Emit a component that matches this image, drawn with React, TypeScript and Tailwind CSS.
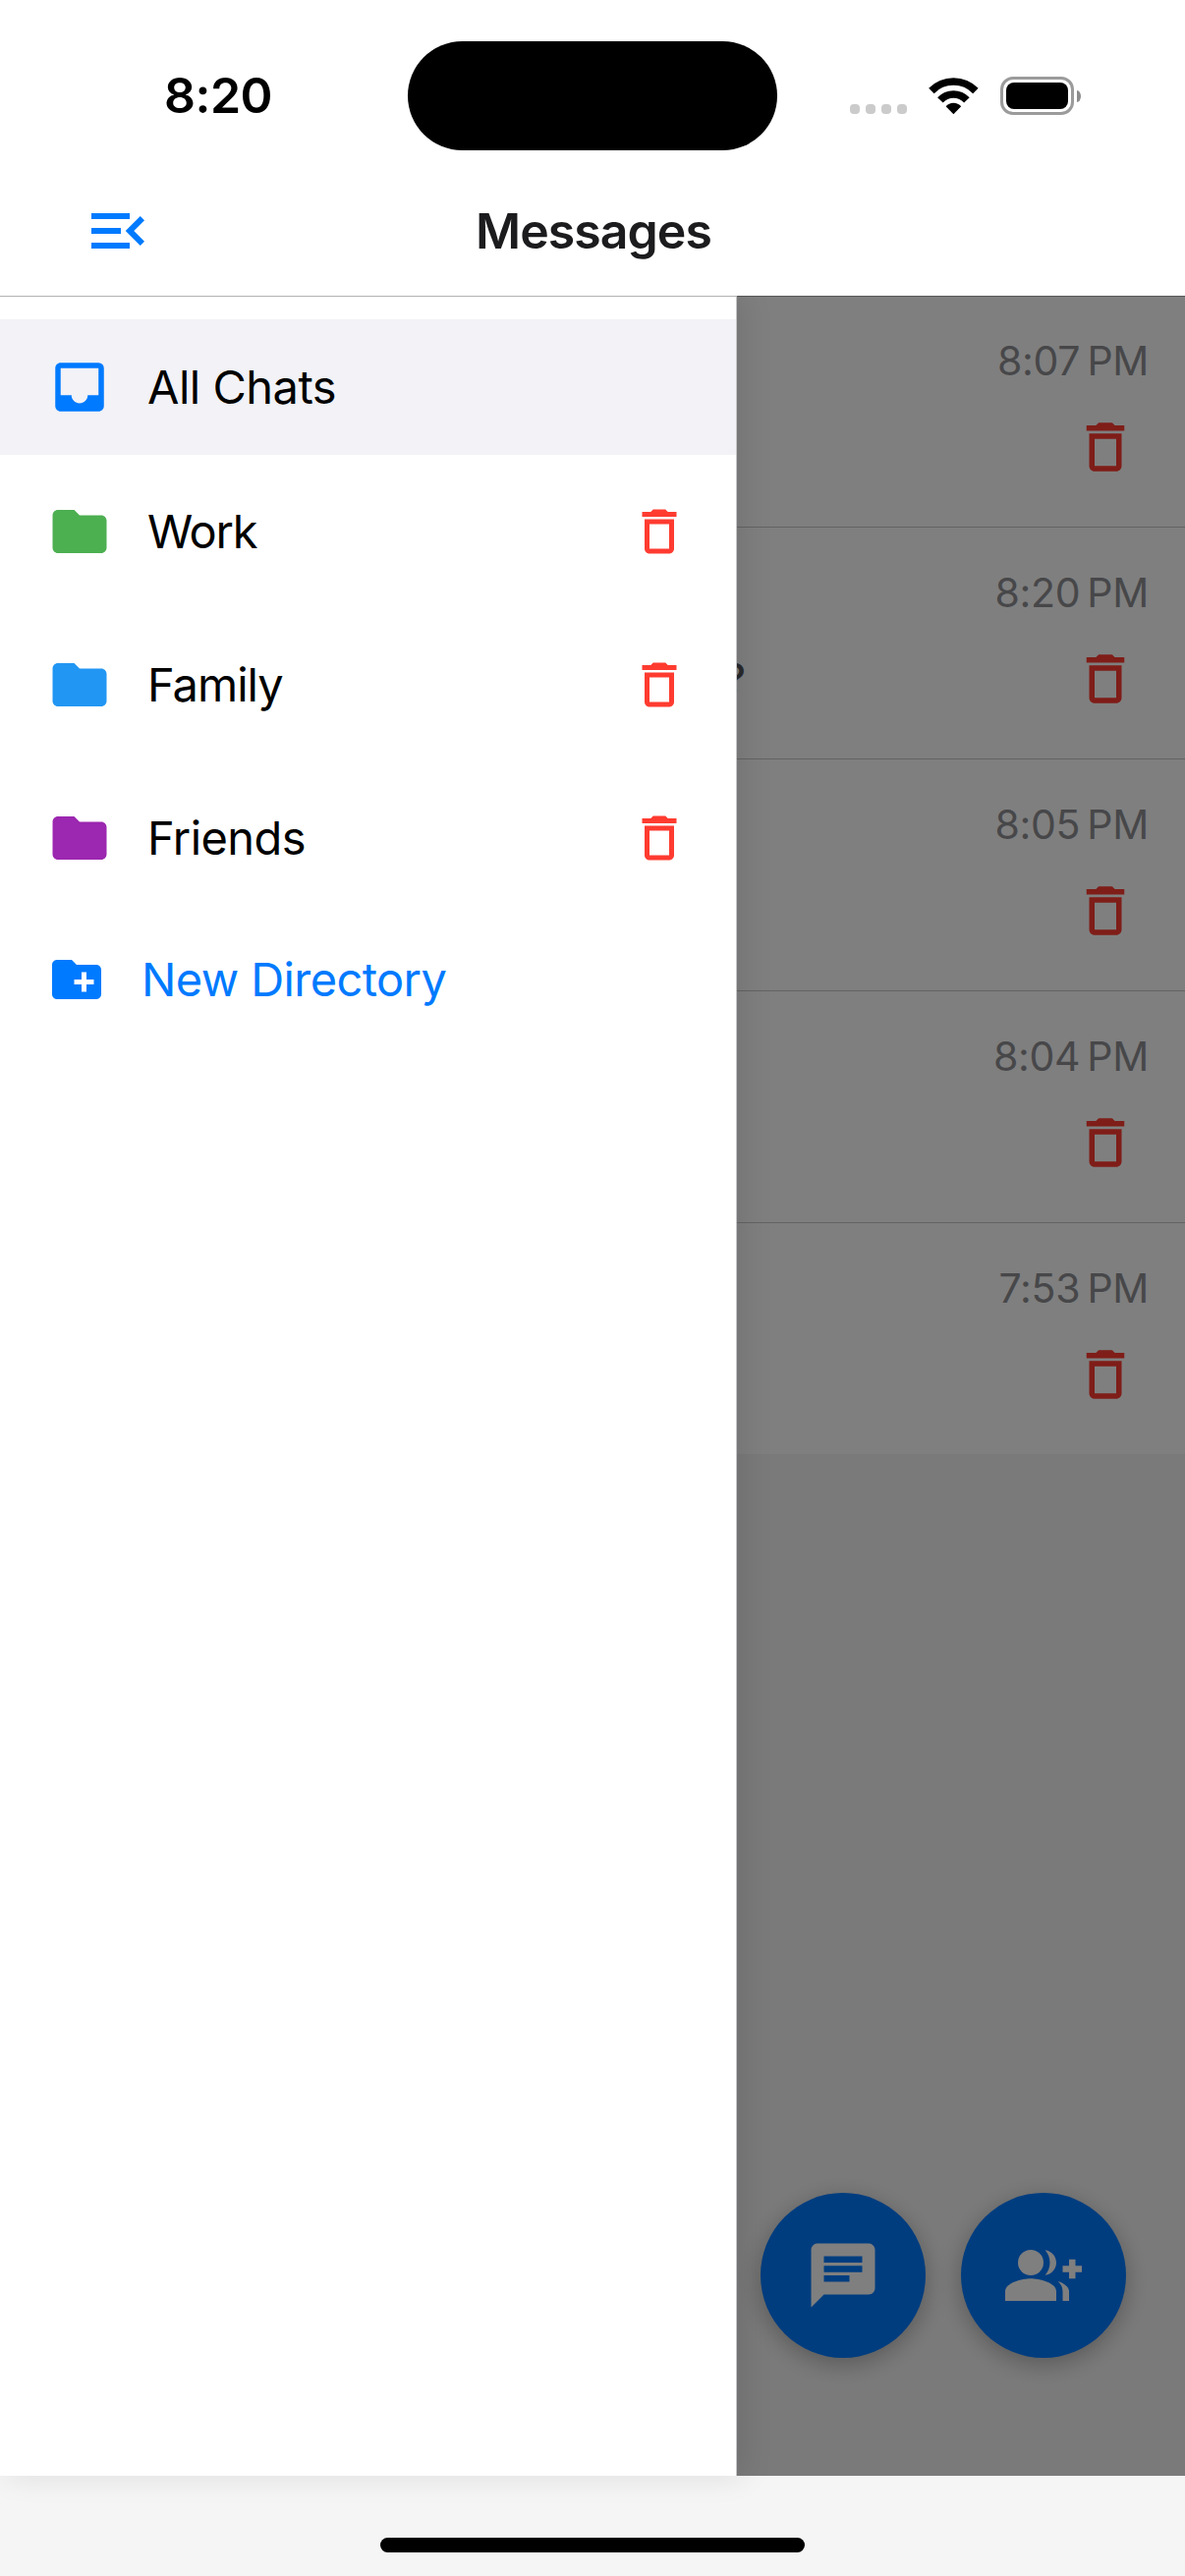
import type { ReactNode } from "react";
import { MdChat, MdDeleteOutline, MdFolder, MdInbox, MdMenuOpen } from "react-icons/md";

const directories = [
  { name: "Work", color: "text-[#4caf50]", tracking: "tracking-[-1.3px]" },
  { name: "Family", color: "text-[#2196f3]", tracking: "tracking-[-1px]" },
  { name: "Friends", color: "text-[#9c27b0]", tracking: "tracking-[-0.57px]" },
];

const chats = [
  { time: "8:07\u202FPM", preview: "" },
  { time: "8:20\u202FPM", preview: "?" },
  { time: "8:05\u202FPM", preview: "" },
  { time: "8:04\u202FPM", preview: "" },
  { time: "7:53\u202FPM", preview: "" },
];

function WifiIcon() {
  return (
    <svg className="mt-px h-[38px] w-[51px]" viewBox="0 0 51 38" fill="none">
      <path d="M2.9 13.5A31.4 31.4 0 0 1 47.9 13.5" stroke="#000" strokeWidth="7.6" />
      <path d="M11.9 22.9A18.4 18.4 0 0 1 38.9 22.9" stroke="#000" strokeWidth="7.6" />
      <path d="M25.4 37.3 17.6 29.3A10.4 10.4 0 0 1 33.2 29.3Z" fill="#000" />
    </svg>
  );
}

function BatteryIcon() {
  return (
    <div className="flex items-center">
      <div className="h-[39px] w-[75px] rounded-[13px] border-3 border-[#9b9b9b] p-[3px]">
        <div className="h-full w-full rounded-[8px] bg-black" />
      </div>
      <div className="ml-[3px] h-[12px] w-[4px] rounded-[0_100%_100%_0/0_50%_50%_0] bg-[#8c8c8c]" />
    </div>
  );
}

function StatusBar() {
  return (
    <div className="flex h-[169px] items-start">
      <div className="mt-[67px] w-[415px] pl-[167px] text-[50px] leading-[60px] font-semibold tracking-[-0.5px] text-black">
        8:20
      </div>
      <div className="mt-[41.5px] h-[111px] w-[376px] rounded-full bg-black" />
      <div className="mt-[78px] flex h-[39px] pl-[74px]">
        <div className="mt-[28px] flex gap-[6px]">
          <div className="size-[10px] rounded-[4px] bg-[#cbcbcb]" />
          <div className="size-[10px] rounded-[4px] bg-[#cbcbcb]" />
          <div className="size-[10px] rounded-[4px] bg-[#cbcbcb]" />
          <div className="size-[10px] rounded-[4px] bg-[#cbcbcb]" />
        </div>
        <div className="ml-[22px]">
          <WifiIcon />
        </div>
        <div className="ml-[22px]">
          <BatteryIcon />
        </div>
      </div>
    </div>
  );
}

function Header() {
  return (
    <div className="grid h-[132px] grid-cols-[1fr_auto_1fr] items-center">
      <MdMenuOpen className="ml-[84px] size-[72px] text-[#007aff]" />
      <h1 className="pb-px pl-[2px] text-[50px] leading-[60px] font-semibold tracking-[-0.95px] text-[#1c1c1e]">
        Messages
      </h1>
      <div />
    </div>
  );
}

function ChatList() {
  return (
    <div className="h-full bg-[#f5f5f5]">
      {chats.map((chat, i) => (
        <div
          key={chat.time}
          className={`flex justify-between bg-white pr-[36px] pl-[36px] ${i < chats.length - 1 ? "h-[236px] border-b border-[#c6c6c8]" : "h-[235px]"}`}
        >
          <div className="mt-[129px] w-[723px] text-right text-[42px] leading-[50px] font-medium text-[#55555a]">
            {chat.preview}
          </div>
          <div className="flex flex-col items-end">
            <span className="mt-[41px] mr-px text-[41px] leading-[50px] tracking-[-0.3px] text-[#8e8e93]">{chat.time}</span>
            <MdDeleteOutline className="mt-[30px] mr-[12px] size-[66px] text-[#ff3b30]" />
          </div>
        </div>
      ))}
    </div>
  );
}

function Fab({ children }: { children: ReactNode }) {
  return (
    <button className="flex size-[168px] items-center justify-center rounded-full bg-[#007aff] text-white shadow-[0_6px_23px_rgba(0,0,0,0.28)]">
      {children}
    </button>
  );
}

function GroupAddIcon() {
  return (
    <svg className="size-[78px]" viewBox="0 0 24 24" fill="currentColor">
      <path d="M22 9V7h-2v2h-2v2h2v2h2v-2h2V9z" />
      <circle cx="8" cy="8" r="4" />
      <path d="M8 13c-2.67 0-8 1.34-8 4v3h16v-3c0-2.66-5.33-4-8-4z" />
      <path d="M12.51 4.05C13.43 5.11 14 6.49 14 8s-.57 2.89-1.49 3.95C14.47 11.7 16 10.04 16 8s-1.53-3.7-3.49-3.95z" />
      <path d="M16.53 13.83C17.42 14.66 18 15.7 18 17v3h2v-3c0-1.45-1.59-2.51-3.47-3.17z" />
    </svg>
  );
}

function Drawer() {
  return (
    <nav className="absolute inset-y-0 left-0 w-[750px] border-t border-r border-t-[#b2b2b2] border-r-[#c6c6c8] bg-white pt-[23px] text-[47px] leading-[57px] text-black shadow-[6px_0_30px_rgba(0,0,0,0.1)]">
      <div className="flex h-[138px] items-center gap-[36px] bg-[#f2f2f7] pl-[48px]">
        <MdInbox className="size-[66px] text-[#007aff]" />
        <span className="pb-[2px] tracking-[-0.5px]">All Chats</span>
      </div>
      {directories.map((d) => (
        <div key={d.name} className="flex h-[156px] items-center gap-[36px] pr-[48px] pl-[48px]">
          <MdFolder className={`size-[66px] ${d.color}`} />
          <span className={`flex-1 pb-[2px] ${d.tracking}`}>{d.name}</span>
          <MdDeleteOutline className="size-[60px] text-[#ff3b30]" />
        </div>
      ))}
      <div className="flex h-[132px] items-center gap-[36px] pl-[48px] text-[#007aff]">
        <svg className="size-[60px]" viewBox="0 0 24 24" fill="currentColor">
          <path
            fillRule="evenodd"
            d="M20 6h-8l-2-2H4c-1.11 0-1.99.89-1.99 2L2 18c0 1.11.89 2 2 2h16c1.11 0 2-.89 2-2V8c0-1.11-.89-2-2-2zm-1 8h-3v3h-2v-3h-3v-2h3V9h2v3h3v2z"
          />
        </svg>
        <span className="pb-[2px] tracking-[-0.6px]">New Directory</span>
      </div>
    </nav>
  );
}

export default function App() {
  return (
    <div className="flex h-[2622px] w-[1206px] flex-col overflow-hidden bg-[#f5f5f5] font-['Inter',sans-serif]">
      <header className="relative z-10 bg-white">
        <StatusBar />
        <Header />
      </header>
      <main className="relative h-[2219px]">
        <ChatList />
        <div className="absolute right-[60px] bottom-[120px] flex gap-[36px]">
          <Fab>
            <MdChat className="size-[78px]" />
          </Fab>
          <Fab>
            <GroupAddIcon />
          </Fab>
        </div>
        <div className="absolute inset-0 border-t border-black/30 bg-black/50" />
        <Drawer />
      </main>
      <footer className="flex flex-1 justify-center pt-[63px]">
        <div className="h-[15px] w-[432px] rounded-full bg-black" />
      </footer>
    </div>
  );
}
